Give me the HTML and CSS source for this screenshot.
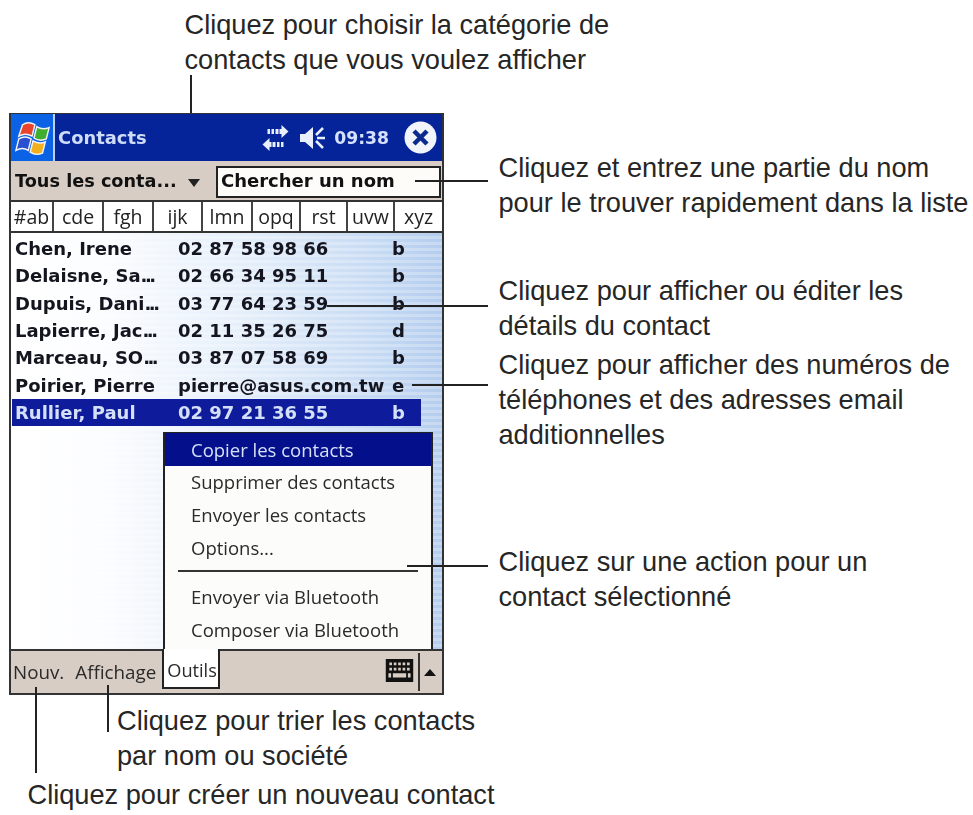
FILE: index.html
```html
<!DOCTYPE html>
<html lang="fr">
<head>
<meta charset="utf-8">
<title>Contacts</title>
<link rel="stylesheet" href="styles.css">
</head>
<body>
<div class="page">
  <div class="caption-top">
    <p>Cliquez pour choisir la catégorie de<br>contacts que vous voulez afficher</p>
  </div>
  <div class="main">
    <div class="device">
      <header class="titlebar">
        <div class="start">
          <svg width="36" height="36" viewBox="0 0 38 38">
            <path d="M8 5 Q14 1 21 5 L18 17 Q11 13 4 17 Z" fill="#e8452a" stroke="#f4f4f4" stroke-width="1.500"/>
            <path d="M23 7 Q29 11 36 8 L33 20 Q26 23 20 19 Z" fill="#3fae2e" stroke="#f4f4f4" stroke-width="1.500"/>
            <path d="M4 20 Q11 16 17 20 L14 32 Q8 28 1 32 Z" fill="#2a4fd0" stroke="#f4f4f4" stroke-width="1.500"/>
            <path d="M19 22 Q26 26 32 23 L29 35 Q22 38 16 34 Z" fill="#f2b01e" stroke="#f4f4f4" stroke-width="1.500"/>
          </svg>
        </div>
        <div class="app-name">Contacts</div>
        <div class="tray">
          <svg class="sync" width="27" height="26" viewBox="0 0 26 26">
            <path d="M5 4h2.500v5H5zM9 4h2.500v5H9zM13 4h3v5h-3zM17 4h2V0l7 6.500-7 6.500V9h-2z" fill="#e8eefc"/>
            <path d="M21 17h-2.500v5H21zM17 17h-2.500v5H17zM13 17h-3v5h3zM9 17H7v-4l-7 6.500L7 26v-4h2z" fill="#e8eefc"/>
          </svg>
          <svg class="speaker" width="30" height="26" viewBox="0 0 28 26">
            <path d="M1 9h5l8-7v22l-8-7H1z" fill="#e8eefc"/>
            <path d="M24 3l-7 7M18 13h8M17 16l7 7" stroke="#e8eefc" stroke-width="2.500" fill="none"/>
          </svg>
          <span class="clock">09:38</span>
          <svg class="close" width="33" height="33" viewBox="0 0 33 33">
            <circle cx="16.500" cy="16.500" r="16" fill="#f2f4fb"/>
            <path d="M10 10l13 13M23 10L10 23" stroke="#0b2a8e" stroke-width="4.500" fill="none"/>
          </svg>
        </div>
      </header>
      <div class="filterbar">
        <div class="category">Tous les conta...</div>
        <div class="caret"></div>
        <div class="search">Chercher un nom</div>
      </div>
      <nav class="tabs">
        <span class="tab t1">#ab</span>
        <span class="tab t2">cde</span>
        <span class="tab t3">fgh</span>
        <span class="tab t4">ijk</span>
        <span class="tab t5">lmn</span>
        <span class="tab t6">opq</span>
        <span class="tab t7">rst</span>
        <span class="tab t8">uvw</span>
        <span class="tab t9">xyz</span>
      </nav>
      <section class="list">
        <div class="row"><span class="name">Chen, Irene</span><span class="phone">02 87 58 98 66</span><span class="kind">b</span></div>
        <div class="row"><span class="name">Delaisne, Sa<span class="dots">...</span></span><span class="phone">02 66 34 95 11</span><span class="kind">b</span></div>
        <div class="row"><span class="name">Dupuis, Dani<span class="dots">...</span></span><span class="phone">03 77 64 23 59</span><span class="kind">b</span></div>
        <div class="row"><span class="name">Lapierre, Jac<span class="dots">...</span></span><span class="phone">02 11 35 26 75</span><span class="kind">d</span></div>
        <div class="row"><span class="name">Marceau, SO<span class="dots">...</span></span><span class="phone">03 87 07 58 69</span><span class="kind">b</span></div>
        <div class="row"><span class="name">Poirier, Pierre</span><span class="phone">pierre@asus.com.tw</span><span class="kind">e</span></div>
        <div class="row selected"><span class="name">Rullier, Paul</span><span class="phone">02 97 21 36 55</span><span class="kind">b</span></div>
        <div class="menu">
          <div class="item active">Copier les contacts</div>
          <div class="item">Supprimer des contacts</div>
          <div class="item">Envoyer les contacts</div>
          <div class="item">Options...</div>
          <div class="separator"></div>
          <div class="item">Envoyer via Bluetooth</div>
          <div class="item">Composer via Bluetooth</div>
        </div>
      </section>
      <footer class="cmdbar">
        <span class="cmd nouv">Nouv.</span>
        <span class="cmd affichage">Affichage</span>
        <span class="cmd outils">Outils</span>
        <span class="cmd-spacer"></span>
        <svg class="keyboard" width="29" height="23" viewBox="0 0 31 26">
          <path fill="#111" fill-rule="evenodd" d="M0 0h31v26H0zM4 4v3h3V4zM9 4v3h3V4zM14 4v3h3V4zM19 4v3h3V4zM24 4v3h3V4zM4 10v3h3v-3zM9 10v3h3v-3zM14 10v3h3v-3zM19 10v3h3v-3zM24 10v3h3v-3zM8 16v5h15v-5zM3 16v5h3v-5zM25 16v5h3v-5z"/>
        </svg>
        <span class="divider"></span>
        <span class="up"></span>
      </footer>
    </div>
    <aside class="callouts">
      <p class="c1">Cliquez et entrez une partie du nom<br>pour le trouver rapidement dans la liste</p>
      <p class="c2">Cliquez pour afficher ou éditer les<br>détails du contact</p>
      <p class="c3">Cliquez pour afficher des numéros de<br>téléphones et des adresses email<br>additionnelles</p>
      <p class="c4">Cliquez sur une action pour un<br>contact sélectionné</p>
    </aside>
    <i class="lead v-cat"></i>
    <i class="lead h-search"></i>
    <i class="lead h-phone"></i>
    <i class="lead h-email"></i>
    <i class="lead h-menu"></i>
    <i class="lead v-nouv"></i>
    <i class="lead v-aff"></i>
  </div>
  <div class="caption-bottom">
    <p class="b1">Cliquez pour trier les contacts<br>par nom ou société</p>
    <p class="b2">Cliquez pour créer un nouveau contact</p>
  </div>
</div>
</body>
</html>
```

FILE: styles.css
```css
* { box-sizing: border-box; }
html, body { margin: 0; padding: 0; background: #fff; }
body { width: 973px; height: 815px; overflow: hidden; font-family: "Liberation Sans", Arial, sans-serif; color: #262626; }
p { margin: 0; font-size: 27.200px; line-height: 34.600px; white-space: nowrap; }

.caption-top { height: 113px; padding: 8px 0 0 184.500px; }

.main { position: relative; display: flex; align-items: flex-start; }
.lead { position: absolute; background: #222; display: block; }
.v-cat { left: 190px; top: -38px; width: 2px; height: 38px; }
.h-search { left: 415px; top: 67px; width: 73px; height: 2px; }
.h-phone { left: 327px; top: 192px; width: 161px; height: 2px; }
.h-email { left: 412px; top: 271px; width: 76px; height: 2px; }
.h-menu { left: 407px; top: 452px; width: 81px; height: 2px; }
.v-nouv { left: 35px; top: 574px; width: 2px; height: 86px; }
.v-aff { left: 107px; top: 572px; width: 2px; height: 47px; }

.device {
  margin-left: 9px; width: 435px; height: 582px; flex: none;
  display: flex; flex-direction: column;
  border: solid #333; border-width: 1px 2px 2px;
  font-family: "DejaVu Sans", sans-serif;
  filter: blur(.35px);
}

.titlebar { height: 47px; flex: none; display: flex; align-items: center; background: #06249a; color: #dfe8fb; }
.start { width: 44px; height: 100%; background: #0c62e4; border-right: 2px solid #bcd0f5; display: flex; align-items: center; justify-content: center; padding-left: 2px; }
.app-name { margin-left: 3px; font-size: 17.900px; font-weight: bold; color: #cfdcf8; }
.tray { margin-left: auto; display: flex; align-items: center; padding-right: 5px; }
.sync { margin-right: 9px; }
.speaker { margin-right: 6px; }
.clock { font-size: 17.200px; font-weight: bold; color: #d6e2fb; margin-right: 15px; }

.filterbar { height: 41px; flex: none; display: flex; align-items: center; background: #d7cdc4; border-bottom: 2px solid #333; position: relative; }
.category { margin-left: 4px; font-size: 17.700px; font-weight: bold; color: #111; white-space: nowrap; }
.caret { margin-left: 11px; margin-top: 5px; width: 0; height: 0; border: 6px solid transparent; border-top: 8px solid #222; border-bottom: 0; }
.search { position: absolute; left: 205px; top: 5px; width: 225px; height: 32px; background: #fdfcf8; border: 2px solid #222; font-size: 18px; font-weight: bold; color: #111; padding-left: 3px; line-height: 26px; white-space: nowrap; }

.tabs { height: 31px; flex: none; display: flex; background: #fff; border-bottom: 2px solid #333; font-family: "Open Sans", sans-serif; font-size: 19.500px; color: #222; }
.tab { display: flex; align-items: center; justify-content: center; border-right: 2px solid #444; }
.t1 { width: 43px; } .t2 { width: 50px; } .t3 { width: 50px; } .t4 { width: 49px; } .t5 { width: 50px; }
.t6 { width: 48px; } .t7 { width: 47px; } .t8 { width: 47px; } .t9 { flex: 1; border-right: 0; }

.list {
  flex: 1; position: relative; padding: 2px 0 0 1px;
  background:
    repeating-linear-gradient(180deg, rgba(255,255,255,0) 0 3px, rgba(255,255,255,.25) 3px 6px),
    linear-gradient(90deg, #fff 0, #fcfdff 20%, #e4eefa 55%, #c9dcf4 82%, #b4cdee 100%);
}
.row { height: 27.300px; display: flex; align-items: center; width: 409px; font-size: 18px; font-weight: bold; color: #15151f; white-space: nowrap; }
.row .name { width: 166px; padding-left: 3px; }
.row .dots { letter-spacing: -2.500px; }
.row .phone { width: 214px; }
.row .kind { width: 20px; }
.row.selected { background: #0e1c9c; color: #d4e0f8; }

.menu { position: absolute; left: 152px; top: 199px; width: 270px; height: 217px; background: #fcfcfb; border: solid #222; border-width: 1px 2px 0; font-family: "Open Sans", sans-serif; font-size: 18.500px; color: #2a2a2a; }
.item { height: 32.600px; padding-left: 26px; display: flex; align-items: center; white-space: nowrap; }
.item.active { background: #040f8c; color: #d6e0f7; }
.separator { height: 2px; margin: 7px 13px 8px 13px; background: #333; }

.cmdbar { height: 44px; flex: none; position: relative; display: flex; align-items: center; background: #d7cdc4; border-top: 2px solid #333; font-family: "Open Sans", sans-serif; font-size: 18.800px; color: #2a2a2a; }
.cmd { white-space: nowrap; }
.nouv { margin-left: 2px; }
.affichage { margin-left: 11px; }
.outils { align-self: flex-start; margin-left: 6px; margin-top: -2px; height: 40px; width: 58px; padding: 4px 0 0 3px; background: #fff; border: solid #222; border-width: 0 2px 2px 2px; display: flex; align-items: center; position: relative; font-size: 18.200px; }
.cmd-spacer { flex: 1; }
.keyboard { margin-right: 4px; margin-top: -4px; }
.divider { width: 2px; height: 38px; background: #333; margin-right: 4px; }
.up { width: 0; height: 0; border: 6.500px solid transparent; border-bottom: 7px solid #111; border-top: 0; margin-right: 6px; }

.callouts { margin-left: 54.500px; width: 470px; flex: none; }
.c1 { margin-top: 38px; }
.c2 { margin-top: 54px; }
.c3 { margin-top: 5px; }
.c4 { margin-top: 93px; }

.caption-bottom { position: relative; }
.b1 { padding-left: 117px; margin-top: 9px; }
.b2 { padding-left: 27.500px; margin-top: 5px; }
```
